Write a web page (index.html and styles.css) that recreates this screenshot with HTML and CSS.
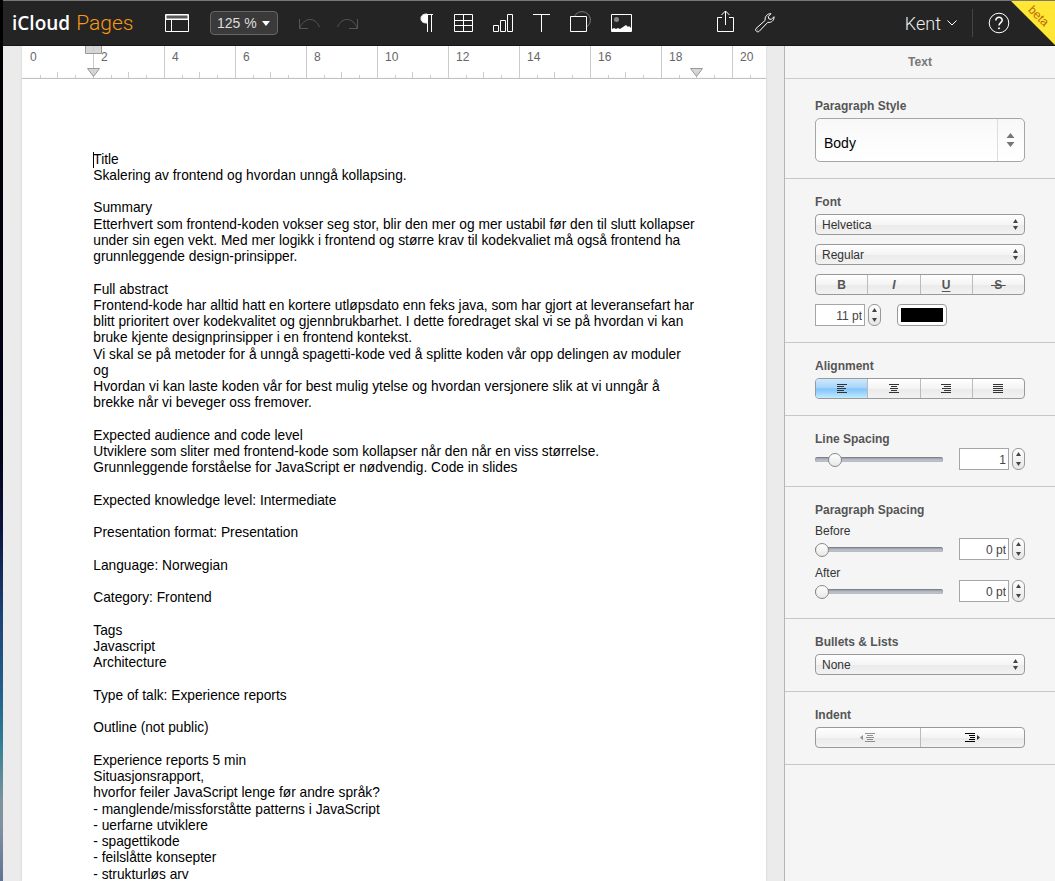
FILE: index.html
```html
<!DOCTYPE html>
<html lang="en">
<head>
<meta charset="utf-8">
<title>iCloud Pages</title>
<link rel="stylesheet" href="styles.css">
</head>
<body>
<div class="app">
  <header class="topbar">
    <h1 class="brand"><span class="brand-cloud">iCloud</span><span class="brand-app">Pages</span></h1>
    <div class="group view-tools">
      <button class="icon" aria-label="View"><svg width="24" height="26" viewBox="0 0 24 26"><path fill="#555b59" d="M1 5h22v4H1z"/><path d="M.5 4.500h23v17H.5zM1 9.500h22M6.500 10v12"/></svg></button>
      <div class="zoom-box">
        <select class="zoom" aria-label="Zoom"><option>125 %</option></select>
        <svg class="zoom-caret" width="8" height="5" viewBox="0 0 8 5"><path d="M0 0h8L4 5z"/></svg>
      </div>
      <div class="group history">
        <button class="icon dim" aria-label="Undo" disabled><svg width="21" height="26" viewBox="0 0 21 26"><path d="M.5 9v9.500H9M.5 18.500C5 7 16 6.500 20.500 17"/></svg></button>
        <button class="icon dim" aria-label="Redo" disabled><svg width="21" height="26" viewBox="0 0 21 26"><path d="M20.500 9v9.500H12M20.500 18.500C16 7 5 6.500 .5 17"/></svg></button>
      </div>
    </div>
    <nav class="group insert-tools" aria-label="Insert">
      <button class="icon" aria-label="Paragraph"><svg width="14" height="26" viewBox="0 0 14 26"><path class="solid" d="M7 4v9C3 13 1 11.500 1 8.500S3 4 7 4z"/><path d="M6 4.500h7M7.500 4v18M11.500 4v18"/></svg></button>
      <button class="icon" aria-label="Table"><svg width="19" height="26" viewBox="0 0 19 26"><path d="M.5 4.500h18v17H.5zM9.500 4v18M0 10.500h19M0 15.500h19"/></svg></button>
      <button class="icon" aria-label="Chart"><svg width="20" height="26" viewBox="0 0 20 26"><path d="M.5 15.500h5v6h-5zM7.500 10.500h5v11h-5zM14.500 4.500h5v17h-5z"/></svg></button>
      <button class="icon" aria-label="Text"><svg width="17" height="26" viewBox="0 0 17 26"><path d="M0 4.500h17M8.500 4v18"/></svg></button>
      <button class="icon" aria-label="Shape"><svg width="21" height="26" viewBox="0 0 21 26"><circle cx="12" cy="10" r="8.400" stroke="#777"/><path fill="#242424" d="M.5 6.500h16v15H.5z"/></svg></button>
      <button class="icon" aria-label="Image"><svg width="21" height="26" viewBox="0 0 21 26"><path d="M.5 4.500h20v17H.5z"/><circle cx="5.500" cy="9.500" r="2.500" fill="#888" stroke="none"/><path class="solid" d="M1 19l2-1 2 1 2-1 2 1 3-2 3-2 2 2 1-1 2 2v4H1z" stroke="none"/></svg></button>
    </nav>
    <div class="group share-tools">
      <button class="icon" aria-label="Share"><svg width="17" height="26" viewBox="0 0 17 26"><path d="M5 7.500H.5v14h16v-14H12M8.500 15V1M4.500 5l4-4 4 4"/></svg></button>
      <button class="icon" aria-label="Settings"><svg width="20" height="26" viewBox="0 0 20 26"><path d="M1 18.500l9.200-8.200C9.500 7 12 3.500 16 3.700L13.300 6.500l.6 2.400 2.400.5L19 6.700c.4 3.600-2.600 6.300-6.200 5.600L4.200 21.300c-1.800 1.700-4.800-1-3.200-2.800zM2.500 19.800h.6"/></svg></button>
    </div>
    <div class="group account">
      <button class="user">Kent <svg width="10" height="6" viewBox="0 0 10 6"><path d="M.5.5L5 5 9.500.5"/></svg></button>
      <span class="rule"></span>
      <button class="icon" aria-label="Help"><svg width="22" height="26" viewBox="0 0 22 26"><circle cx="11" cy="13" r="9.800"/><path d="M7.800 10.500c0-4.400 6.600-4 6.400-.3-.1 2.300-3.200 2.600-3.200 5.400" stroke-width="1.500"/><circle class="solid" cx="11" cy="18.300" r=".6"/></svg></button>
    </div>
    <div class="beta"><span>beta</span></div>
  </header>

  <div class="body">
    <main class="workspace">
      <div class="ruler">
        <div class="cell">0</div>
        <div class="cell">2
          <svg class="mark" width="17" height="33" viewBox="0 0 17 33"><path d="M.5-1h16v8.500H.5zM2.500 22.500h12L8.500 30.500z"/></svg>
        </div>
        <div class="cell">4</div>
        <div class="cell">6</div>
        <div class="cell">8</div>
        <div class="cell">10</div>
        <div class="cell">12</div>
        <div class="cell">14</div>
        <div class="cell">16</div>
        <div class="cell">18
          <svg class="mark end" width="17" height="33" viewBox="0 0 17 33"><path d="M2.500 22.500h12L8.500 30.500z"/></svg>
        </div>
        <div class="cell">20</div>
      </div>
      <article class="page" lang="nb">
        <p><span class="caret"></span>Title</p>
        <p>Skalering av frontend og hvordan unngå kollapsing.</p>
        <br>
        <p>Summary</p>
        <p>Etterhvert som frontend-koden vokser seg stor, blir den mer og mer ustabil før den til slutt kollapser<br>under sin egen vekt. Med mer logikk i frontend og større krav til kodekvaliet må også frontend ha<br>grunnleggende design-prinsipper.</p>
        <br>
        <p>Full abstract</p>
        <p>Frontend-kode har alltid hatt en kortere utløpsdato enn feks java, som har gjort at leveransefart har<br>blitt prioritert over kodekvalitet og gjennbrukbarhet. I dette foredraget skal vi se på hvordan vi kan<br>bruke kjente designprinsipper i en frontend kontekst.</p>
        <p>Vi skal se på metoder for å unngå spagetti-kode ved å splitte koden vår opp delingen av moduler<br>og</p>
        <p>Hvordan vi kan laste koden vår for best mulig ytelse og hvordan versjonere slik at vi unngår å<br>brekke når vi beveger oss fremover.</p>
        <br>
        <p>Expected audience and code level</p>
        <p>Utviklere som sliter med frontend-kode som kollapser når den når en viss størrelse.</p>
        <p>Grunnleggende forståelse for JavaScript er nødvendig. Code in slides</p>
        <br>
        <p>Expected knowledge level: Intermediate</p>
        <br>
        <p>Presentation format: Presentation</p>
        <br>
        <p>Language: Norwegian</p>
        <br>
        <p>Category: Frontend</p>
        <br>
        <p>Tags</p>
        <p>Javascript</p>
        <p>Architecture</p>
        <br>
        <p>Type of talk: Experience reports</p>
        <br>
        <p>Outline (not public)</p>
        <br>
        <p>Experience reports 5 min</p>
        <p>Situasjonsrapport,</p>
        <p>hvorfor feiler JavaScript lenge før andre språk?</p>
        <p>- manglende/missforståtte patterns i JavaScript</p>
        <p>- uerfarne utviklere</p>
        <p>- spagettikode</p>
        <p>- feilslåtte konsepter</p>
        <p>- strukturløs arv</p>
      </article>
    </main>

    <aside class="inspector">
      <h2 class="inspector-title">Text</h2>

      <section class="panel first">
        <label class="heading" for="pstyle">Paragraph Style</label>
        <div class="picker">
          <select id="pstyle" class="big"><option>Body</option></select>
          <svg class="arrows large" width="9" height="14" viewBox="0 0 9 14"><path d="M.5 5h8l-4-5zM.5 9h8l-4 5z"/></svg>
        </div>
      </section>

      <section class="panel">
        <label class="heading" for="font">Font</label>
        <div class="stack">
          <div class="picker">
            <select id="font"><option>Helvetica</option></select>
            <svg class="arrows" width="5" height="11" viewBox="0 0 5 11"><path d="M0 4h5L2.500 0zM0 7h5L2.500 11z"/></svg>
          </div>
          <div class="picker">
            <select aria-label="Font style"><option>Regular</option></select>
            <svg class="arrows" width="5" height="11" viewBox="0 0 5 11"><path d="M0 4h5L2.500 0zM0 7h5L2.500 11z"/></svg>
          </div>
          <div class="segments">
            <button>B</button><button class="italic">I</button><button class="underline">U</button><button class="strike">&nbsp;S&nbsp;</button>
          </div>
          <div class="row">
            <input class="number" type="text" value="11 pt" aria-label="Font size">
            <div class="stepper"><button aria-label="Larger"><svg width="5" height="4" viewBox="0 0 5 4"><path d="M0 4h5L2.500 0z"/></svg></button><button aria-label="Smaller"><svg width="5" height="4" viewBox="0 0 5 4"><path d="M0 0h5L2.500 4z"/></svg></button></div>
            <button class="swatch" aria-label="Text colour"><span></span></button>
          </div>
        </div>
      </section>

      <section class="panel">
        <h3 class="heading">Alignment</h3>
        <div class="segments">
          <button class="on" aria-label="Left"><svg width="10" height="9" viewBox="0 0 10 9"><path d="M0 .5h10M0 2.500h7M0 4.500h9M0 6.500h7M0 8.500h10"/></svg></button><button aria-label="Centre"><svg width="10" height="9" viewBox="0 0 10 9"><path d="M0 .5h10M2 2.500h6M1 4.500h8M2 6.500h6M0 8.500h10"/></svg></button><button aria-label="Right"><svg width="10" height="9" viewBox="0 0 10 9"><path d="M0 .5h10M3 2.500h7M1 4.500h9M3 6.500h7M0 8.500h10"/></svg></button><button aria-label="Justify"><svg width="10" height="9" viewBox="0 0 10 9"><path d="M0 .5h10M0 2.500h10M0 4.500h10M0 6.500h10M0 8.500h10"/></svg></button>
        </div>
      </section>

      <section class="panel">
        <label class="heading tight" for="line">Line Spacing</label>
        <div class="row">
          <input id="line" class="slider" type="range" min="0" max="100" value="11">
          <input class="number" type="text" value="1" aria-label="Line spacing value">
          <div class="stepper"><button aria-label="More"><svg width="5" height="4" viewBox="0 0 5 4"><path d="M0 4h5L2.500 0z"/></svg></button><button aria-label="Less"><svg width="5" height="4" viewBox="0 0 5 4"><path d="M0 0h5L2.500 4z"/></svg></button></div>
        </div>
      </section>

      <section class="panel">
        <h3 class="heading loose">Paragraph Spacing</h3>
        <label class="sub" for="before">Before</label>
        <div class="row spaced">
          <input id="before" class="slider" type="range" min="0" max="100" value="0">
          <input class="number" type="text" value="0 pt" aria-label="Space before">
          <div class="stepper"><button aria-label="More"><svg width="5" height="4" viewBox="0 0 5 4"><path d="M0 4h5L2.500 0z"/></svg></button><button aria-label="Less"><svg width="5" height="4" viewBox="0 0 5 4"><path d="M0 0h5L2.500 4z"/></svg></button></div>
        </div>
        <label class="sub" for="after">After</label>
        <div class="row">
          <input id="after" class="slider" type="range" min="0" max="100" value="0">
          <input class="number" type="text" value="0 pt" aria-label="Space after">
          <div class="stepper"><button aria-label="More"><svg width="5" height="4" viewBox="0 0 5 4"><path d="M0 4h5L2.500 0z"/></svg></button><button aria-label="Less"><svg width="5" height="4" viewBox="0 0 5 4"><path d="M0 0h5L2.500 4z"/></svg></button></div>
        </div>
      </section>

      <section class="panel">
        <label class="heading" for="bullets">Bullets &amp; Lists</label>
        <div class="picker">
          <select id="bullets"><option>None</option></select>
          <svg class="arrows" width="5" height="11" viewBox="0 0 5 11"><path d="M0 4h5L2.500 0zM0 7h5L2.500 11z"/></svg>
        </div>
      </section>

      <section class="panel">
        <h3 class="heading">Indent</h3>
        <div class="segments">
          <button class="faded" aria-label="Decrease indent" disabled><svg width="15" height="9" viewBox="0 0 15 9"><path d="M5 .5h10M7 2.500h6M6 4.500h8M7 6.500h6M5 8.500h10"/><path class="fill" d="M3 2v5L0 4.500z"/></svg></button><button class="strong" aria-label="Increase indent"><svg width="15" height="9" viewBox="0 0 15 9"><path d="M0 .5h10M4 2.500h6M5 4.500h5M4 6.500h6M0 8.500h10"/><path class="fill" d="M12 2v5l3-2.500z"/></svg></button>
        </div>
      </section>
    </aside>
  </div>
</div>
</body>
</html>
```

FILE: styles.css
```css
* { box-sizing: border-box; }

body {
  margin: 0;
  font-family: "Liberation Sans", Arial, sans-serif;
  font-size: 12px;
  color: #333;
  background: linear-gradient(#000 0%, #02021a 52%, #0c1440 60%, #1d4378 70%, #22628c 79%, #2f7d93 84%, #7d949c 91%, #8090a0 94%, #5f7396 100%);
}

button, input, select { font: inherit; color: inherit; margin: 0; }
button { padding: 0; border: 0; background: none; }
h1, h2, h3, p { margin: 0; font-size: inherit; }
svg { display: block; }

.app {
  display: flex;
  flex-direction: column;
  height: 100vh;
  margin-left: 3px;
  overflow: hidden;
  background: #ebebeb;
}

/* Toolbar */
.topbar {
  position: relative;
  flex: none;
  display: flex;
  align-items: center;
  height: 46px;
  padding: 0 45px 0 9px;
  border-top: 1px solid #777;
  border-bottom: 1px solid #151515;
  background: #242424;
}
.brand {
  flex: none;
  display: flex;
  align-items: baseline;
  gap: 6px;
  width: 153px;
  white-space: nowrap;
  font-weight: 400;
  line-height: 26px;
}
.brand-cloud { font-family: "Open Sans", sans-serif; font-weight: 600; font-size: 19px; color: #fff; }
.brand-app { font-family: Roboto, sans-serif; font-weight: 300; font-size: 21px; color: #f79a14; }

.group { display: flex; align-items: center; flex: none; }
.view-tools { gap: 21px; }
.history { gap: 17px; }
.insert-tools { gap: 20px; margin-left: 62px; }
.share-tools { gap: 21px; margin-left: 85px; }
.account { margin-left: auto; gap: 15px; }

.icon svg, .user svg { fill: none; stroke: #fff; }
.icon .solid { fill: #fff; }
.icon.dim svg { stroke: #555; }

.zoom-box { position: relative; }
.zoom {
  display: block;
  appearance: none;
  width: 68px;
  height: 24px;
  padding: 0 6px;
  border: 1px solid #666;
  border-radius: 4px;
  background: #3a3a3a;
  color: #ddd;
  font-size: 14px;
}
.zoom-caret { position: absolute; right: 8px; top: 10px; fill: #fff; pointer-events: none; }

.user {
  display: flex;
  align-items: center;
  gap: 6px;
  font-family: Roboto, sans-serif;
  font-weight: 300;
  font-size: 18px;
  color: #eee;
}
.rule { width: 1px; height: 28px; background: #444; }

.beta {
  position: absolute;
  top: 0;
  right: 0;
  width: 44px;
  height: 44px;
  overflow: hidden;
  background: #ffe733;
  clip-path: polygon(0 0, 100% 0, 100% 100%);
}
.beta span {
  position: absolute;
  top: 7px;
  left: 16px;
  font-size: 12px;
  line-height: 16px;
  color: #b8630a;
  transform: rotate(45deg);
}

/* Document */
.body { flex: 1; display: flex; min-height: 0; }
.workspace {
  flex: 1;
  display: flex;
  flex-direction: column;
  min-width: 0;
  padding: 0 18px 0 19px;
}
.ruler {
  flex: none;
  display: flex;
  height: 33px;
  overflow: hidden;
  border-bottom: 1px solid #bbb;
  background: #fff;
  box-shadow: 0 0 2px #ccc;
}
.cell {
  position: relative;
  flex: none;
  width: 71px;
  padding: 4px 0 0 7px;
  border-left: 1px solid #ccc;
  line-height: 14px;
  color: #666;
  background:
    linear-gradient(#ccc, #ccc) 17px 100% / 1px 3px no-repeat,
    linear-gradient(#ccc, #ccc) 34px 100% / 1px 6px no-repeat,
    linear-gradient(#ccc, #ccc) 52px 100% / 1px 3px no-repeat;
}
.cell:first-child { border-left-color: #fff; }
.mark {
  position: absolute;
  top: 0;
  left: -9px;
  fill: #ccc;
  fill-opacity: .8;
  stroke: #999;
}
.mark.end { left: 26px; }

/* The page is laid out in points and shown at 125 % */
.page {
  flex: 1;
  min-height: 0;
  overflow: hidden;
  zoom: 1.25;
  padding: 58px 40px 0 57px;
  background: #fff;
  color: #000;
  font-size: 11px;
  line-height: 13px;
  white-space: nowrap;
  box-shadow: 0 0 2px #ccc;
}
.caret { position: absolute; height: 13px; border-left: 1px solid #000; }

/* Inspector */
.inspector { flex: none; width: 271px; border-left: 1px solid #b5b5b5; background: #f5f5f5; }
.inspector-title {
  padding: 9px 0 8px;
  border-bottom: 1px solid #ccc;
  line-height: 15px;
  text-align: center;
  color: #777;
}
.panel { padding: 15px 30px 16px; border-bottom: 1px solid #c6c6cc; }
.panel.first { padding-top: 19px; }
.heading { display: block; margin-bottom: 4px; font-weight: 700; line-height: 16px; color: #555; }
.heading.tight { margin-bottom: 1px; }
.heading.loose { margin-bottom: 6px; }
.stack { display: flex; flex-direction: column; gap: 9px; }
.sub { display: block; line-height: 14px; }

.picker { position: relative; }
.picker select {
  display: block;
  appearance: none;
  width: 100%;
  height: 21px;
  padding: 0 6px;
  border: 1px solid #999;
  border-radius: 4px;
  background: linear-gradient(#fff, #f4f4f4 50%, #eaeaea 51%, #f2f2f2);
}
.picker .big {
  height: 44px;
  padding: 6px 8px 0;
  border-color: #a5a5aa;
  border-radius: 5px;
  font-size: 14px;
  color: #000;
  background:
    linear-gradient(#ddd, #ddd) right 26px top 0 / 1px 100% no-repeat,
    linear-gradient(#f8f8f8, #fff);
}
.arrows { position: absolute; right: 7px; top: 5px; fill: #444; pointer-events: none; }
.arrows.large { right: 10px; top: 15px; fill: #777; }

.segments {
  display: flex;
  height: 21px;
  border: 1px solid #999;
  border-radius: 4px;
  overflow: hidden;
  background: linear-gradient(#fff, #f4f4f4 50%, #eaeaea 51%, #f2f2f2);
}
.segments button {
  flex: 1;
  display: flex;
  align-items: center;
  justify-content: center;
  font-size: 12px;
  font-weight: 700;
  color: #555;
}
.segments button + button { border-left: 1px solid #bbb; }
.segments svg { stroke: #333; }
.segments .fill { fill: #333; stroke: none; }
.segments .italic { font-style: italic; }
.segments .underline { text-decoration: underline; text-underline-offset: 2px; }
.segments .strike { text-decoration: line-through; }
.segments .on { background: linear-gradient(#cfe8fd, #a4d3fb 49%, #7fc2fa 51%, #c0ecff); box-shadow: 0 0 0 1px #5a68a8; }
.segments .faded { opacity: .5; }
.segments .strong svg { stroke: #000; }

.row { display: flex; align-items: center; }
.row.spaced { margin-bottom: 6px; }
.number {
  width: 50px;
  height: 22px;
  padding: 1px 2px 0;
  border: 1px solid #a5a5aa;
  background: #fff;
  text-align: right;
  color: #444;
}
.stepper {
  display: flex;
  flex-direction: column;
  width: 13px;
  height: 22px;
  margin-left: 3px;
  border: 1px solid #999;
  border-radius: 6px;
  background: linear-gradient(#fff, #e6e6e6);
}
.stepper button { flex: 1; display: flex; align-items: center; justify-content: center; }
.stepper svg { fill: #444; }
.swatch {
  width: 50px;
  height: 22px;
  margin-left: 16px;
  padding: 3px;
  border: 1px solid #999;
  border-radius: 4px;
  background: #fff;
}
.swatch span { display: block; height: 14px; background: #000; }

.slider {
  appearance: none;
  flex: 1;
  min-width: 0;
  height: 14px;
  margin-right: 16px;
  background: none;
}
.slider::-webkit-slider-runnable-track {
  height: 5px;
  border-radius: 3px;
  background: linear-gradient(#70757e, #b0b5c0 40%, #c4c9d2);
  box-shadow: inset 0 0 1px #666;
}
.slider::-webkit-slider-thumb {
  appearance: none;
  width: 14px;
  height: 14px;
  margin-top: -4px;
  border: 1px solid #888;
  border-radius: 50%;
  background: linear-gradient(#fff, #e8e8e8);
}
```
